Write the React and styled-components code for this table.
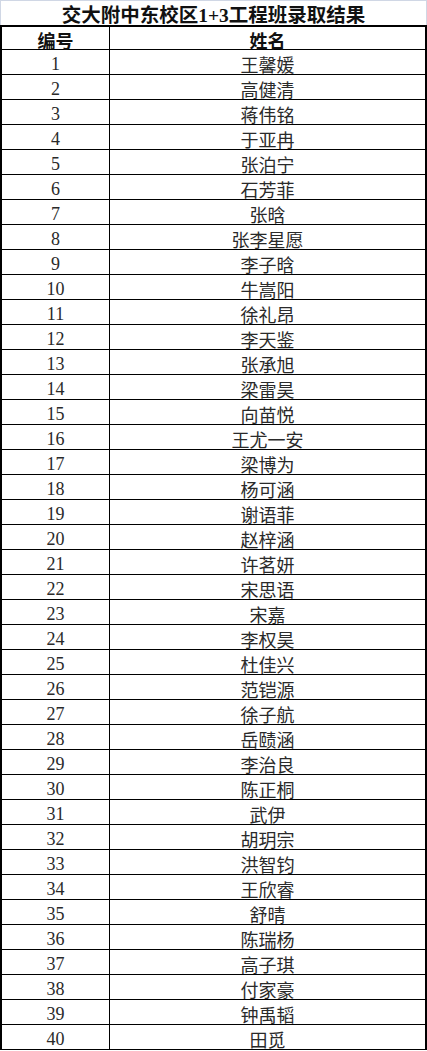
import React from "react";
import styled, { createGlobalStyle } from "styled-components";

const GlobalStyle = createGlobalStyle`
  html, body { margin: 0; padding: 0; background: #ffffff; }
  * { box-sizing: border-box; }
`;

const FONT = `"Liberation Serif", "Noto Sans CJK SC", serif`;

const Sheet = styled.div`
  width: 427px;
  font-family: ${FONT};
  color: #1c1c1c;
`;

const Title = styled.div`
  height: 25px;
  border-top: 1px solid #d0d7e5;
  border-left: 1px solid #d0d7e5;
  border-right: 1px solid #d0d7e5;
  display: flex;
  align-items: center;
  justify-content: center;
  font-size: 19.5px;
  font-weight: 700;
  color: #111;
  padding-top: 1px;
`;

const Table = styled.div`
  width: 427px;
  display: grid;
  grid-template-columns: 108px 1fr;
  border-top: 2px solid #000;
  border-left: 2px solid #000;
  border-right: 2px solid #000;
`;

const Cell = styled.div`
  height: ${(p) => (p.$head ? "23px" : "25px")};
  border-bottom: 1px solid #000;
  border-right: ${(p) => (p.$first ? "1px solid #000" : "none")};
  display: flex;
  align-items: center;
  justify-content: center;
  font-size: 18px;
  font-weight: ${(p) => (p.$head ? 700 : 400)};
  color: ${(p) => (p.$head ? "#111" : "#2a2a2a")};
  padding-top: ${(p) => (p.$head ? "3px" : p.$first ? "5px" : "4px")};
`;

const names = [
  "王馨媛", "高健清", "蒋伟铭", "于亚冉", "张泊宁", "石芳菲", "张晗", "张李星愿",
  "李子晗", "牛嵩阳", "徐礼昂", "李天鉴", "张承旭", "梁雷昊", "向苗悦", "王尤一安",
  "梁博为", "杨可涵", "谢语菲", "赵梓涵", "许茗妍", "宋思语", "宋嘉", "李权昊",
  "杜佳兴", "范铠源", "徐子航", "岳赜涵", "李治良", "陈正桐", "武伊", "胡玥宗",
  "洪智钧", "王欣睿", "舒晴", "陈瑞杨", "高子琪", "付家豪", "钟禹韬", "田觅",
];

export default function App() {
  return (
    <>
      <GlobalStyle />
      <Sheet>
        <Title>交大附中东校区1+3工程班录取结果</Title>
        <Table>
          <Cell $head $first>编号</Cell>
          <Cell $head>姓名</Cell>
          {names.map((n, i) => (
            <React.Fragment key={i}>
              <Cell $first>{i + 1}</Cell>
              <Cell>{n}</Cell>
            </React.Fragment>
          ))}
        </Table>
      </Sheet>
    </>
  );
}
